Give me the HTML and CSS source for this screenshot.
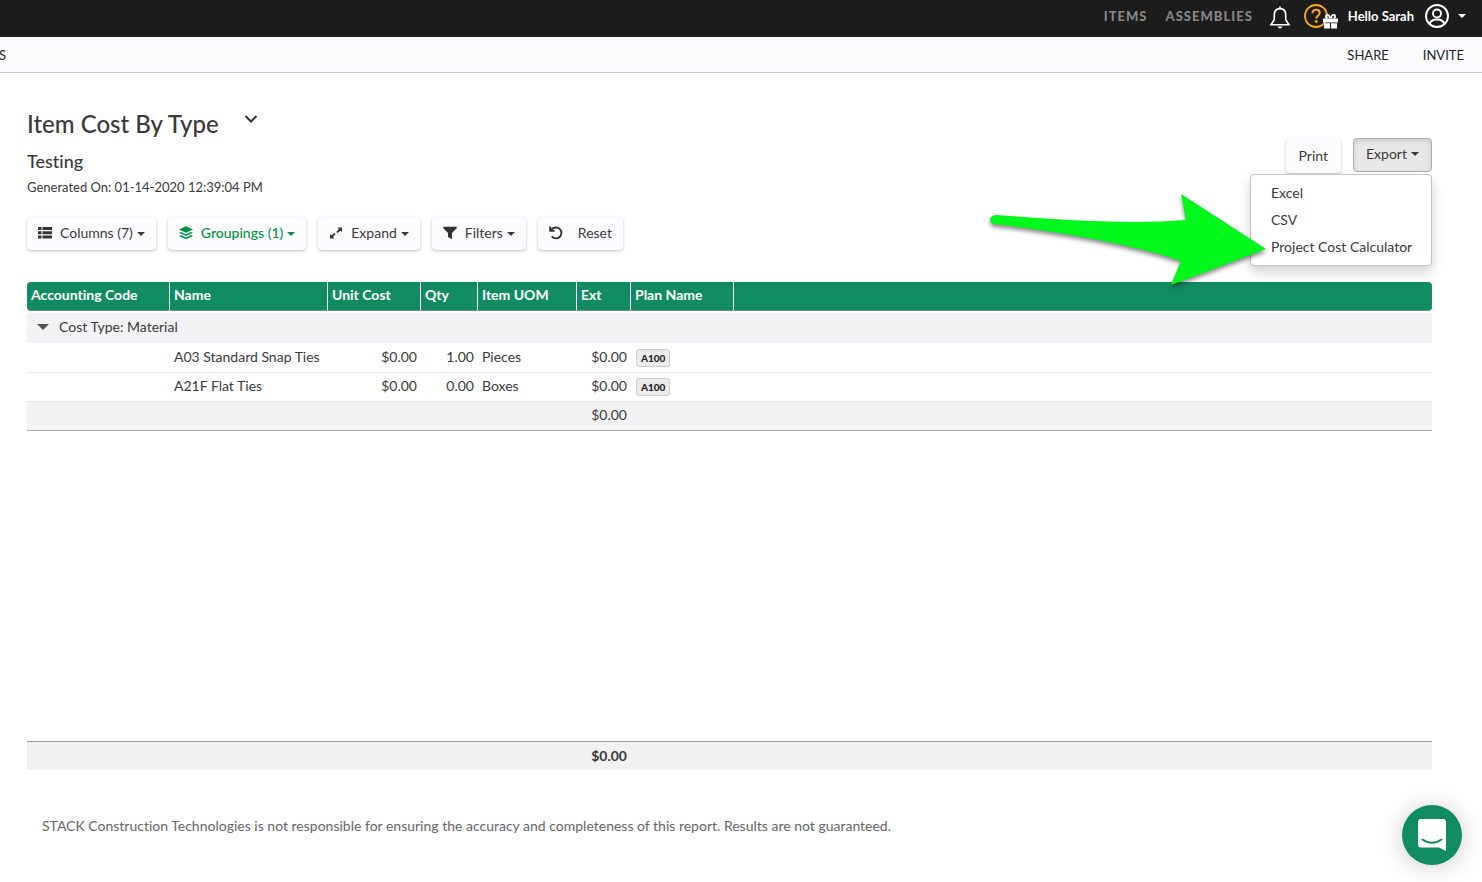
FILE: index.html
```html
<!DOCTYPE html>
<html lang="en">
<head>
<meta charset="utf-8">
<title>Item Cost By Type</title>
<link rel="stylesheet" href="styles.css">
</head>
<body>
<header class="topbar">
  <nav class="topnav">
    <a class="topnav-link" href="#">ITEMS</a>
    <a class="topnav-link" href="#">ASSEMBLIES</a>
  </nav>
  <button class="icon-btn bell" type="button" aria-label="Notifications">
    <svg width="22" height="24" viewBox="0 0 22 24" fill="none" stroke="#fff" stroke-width="1.6" stroke-linejoin="round"><path d="M11 2.6C7.2 2.6 5.3 5.4 5.3 9v3.6c0 2.4-1.5 3.9-3.6 6.2h18.6c-2.1-2.3-3.6-3.8-3.6-6.2V9c0-3.6-1.900-6.400-5.700-6.400z"/><path d="M11 1v1.6" stroke-linecap="round"/><path d="M8.600 20.600c.4 1.200 1.300 1.900 2.400 1.900s2-.7 2.400-1.900z" fill="#fff" stroke="none"/></svg>
  </button>
  <button class="icon-btn help" type="button" aria-label="Help">
    <svg width="34" height="26" viewBox="0 0 34 26"><circle cx="12" cy="13" r="11" fill="none" stroke="#fba919" stroke-width="1.8"/><path d="M8.500 10.300c0-2.200 1.500-3.500 3.600-3.500s3.600 1.200 3.600 3.100c0 2.700-3.500 2.900-3.500 5.700" fill="none" stroke="#fba919" stroke-width="2"/><circle cx="12.200" cy="18.500" r="1.400" fill="#fba919"/><g fill="#fff"><path d="M19 15.500h15v4H19zM20 20.200h6v5.300h-6zM27 20.200h6v5.300h-6z"/><path d="M25.900 15.200c-.5-2.500-1.600-3.600-3-3.300-1.500.4-1.300 2.400.1 3.300M27.100 15.200c.5-2.500 1.600-3.600 3-3.300 1.500.4 1.300 2.400-.1 3.300" fill="none" stroke="#fff" stroke-width="1.800"/></g></svg>
  </button>
  <button class="user-btn" type="button">
    <span>Hello Sarah</span>
    <svg width="24" height="24" viewBox="0 0 24 24" fill="none" stroke="#fff" stroke-width="1.900"><circle cx="12" cy="12" r="11"/><circle cx="12" cy="9.500" r="4"/><path d="M4.800 19.800c.8-3.200 3.400-4.300 7.200-4.300s6.400 1.100 7.200 4.300"/></svg>
    <i class="caret"></i>
  </button>
</header>
<div class="subbar">
  <a class="subbar-link subbar-cut" href="#">S</a>
  <div class="subbar-actions">
    <a class="subbar-link" href="#">SHARE</a>
    <a class="subbar-link" href="#">INVITE</a>
  </div>
</div>
<main class="report">
  <div class="report-head">
    <div>
      <div class="title-row">
        <h1>Item Cost By Type</h1>
        <button class="title-toggle" type="button" aria-label="Choose report">
          <svg width="14" height="10" viewBox="0 0 14 10" fill="none" stroke="#333" stroke-width="2"><path d="M1.500 2l5.500 5.500L12.500 2"/></svg>
        </button>
      </div>
      <h2>Testing</h2>
      <p class="generated">Generated On: 01-14-2020 12:39:04 PM</p>
    </div>
    <div class="head-actions">
      <button class="btn btn-print" type="button">Print</button>
      <div class="dropdown">
        <button class="btn btn-export" type="button" aria-expanded="true">Export<i class="caret"></i></button>
        <div class="menu">
          <a href="#">Excel</a>
          <a href="#">CSV</a>
          <a href="#">Project Cost Calculator</a>
          <svg class="pointer" width="286" height="100" viewBox="0 0 286 100"><path d="M10 24C62 28 140 34 200 29L195 3 280 58 185 94 195 70C150 54 70 40 8 33 3 32 2 25 10 24z" fill="#00f91a"/></svg>
        </div>
      </div>
    </div>
  </div>
  <div class="toolbar">
    <button class="btn tool" type="button">
      <svg width="14" height="14" viewBox="0 0 14 14" fill="#333"><path d="M0 1h3.500v3H0zM4.500 1H14v3H4.500zM0 5.300h3.500v3H0zM4.500 5.300H14v3H4.500zM0 9.600h3.500v3H0zM4.500 9.600H14v3H4.500z"/></svg>
      <span>Columns (7)<i class="caret"></i></span>
    </button>
    <button class="btn tool tool-active" type="button">
      <svg width="14" height="14" viewBox="0 0 14 14" fill="#009540"><path d="M7 .3l7 3.200-7 3.200-7-3.200z"/><path d="M0 6.800l2-.9 5 2.300 5-2.300 2 .9-7 3.200z"/><path d="M0 10l2-.9 5 2.300 5-2.300 2 .9-7 3.300z"/></svg>
      <span>Groupings (1)<i class="caret"></i></span>
    </button>
    <button class="btn tool" type="button">
      <svg width="14" height="14" viewBox="0 0 14 14" fill="#333"><path d="M8.500 1.500H13v4.500l-1.500-1.500-3 2.600-1.200-1.200 2.700-2.900zM5.500 12.500H1V8l1.500 1.500L5.300 7l1.200 1.200L4 11z"/></svg>
      <span>Expand<i class="caret"></i></span>
    </button>
    <button class="btn tool" type="button">
      <svg width="14" height="14" viewBox="0 0 14 14" fill="#333"><path d="M.3.800h13.400v1.400L9 7v6.200L5 11V7L.3 2.200z"/></svg>
      <span>Filters<i class="caret"></i></span>
    </button>
    <button class="btn tool tool-reset" type="button">
      <svg width="14" height="14" viewBox="0 0 14 14" fill="none" stroke="#333" stroke-width="1.900"><path d="M2.300 4.300C3.400 2.400 5 1.500 7 1.500c3.100 0 5.400 2.400 5.400 5.400S10.100 12.400 7 12.400c-1.900 0-3.300-.8-4.300-2.200"/><path d="M1.200.5v4.400h4.500"/></svg>
      <span>Reset</span>
    </button>
  </div>
  <div class="grid">
    <table>
      <colgroup><col class="c-code"><col class="c-name"><col class="c-cost"><col class="c-qty"><col class="c-uom"><col class="c-ext"><col class="c-plan"><col></colgroup>
      <thead>
        <tr><th>Accounting Code</th><th>Name</th><th>Unit Cost</th><th>Qty</th><th>Item UOM</th><th>Ext</th><th>Plan Name</th><th></th></tr>
      </thead>
      <tbody>
        <tr class="group"><td colspan="8"><button type="button" class="group-btn"><i class="group-caret"></i>Cost Type: Material</button></td></tr>
        <tr><td></td><td>A03 Standard Snap Ties</td><td class="num">$0.00</td><td class="num">1.00</td><td>Pieces</td><td class="num">$0.00</td><td class="plan"><span class="tag">A100</span></td><td></td></tr>
        <tr><td></td><td>A21F Flat Ties</td><td class="num">$0.00</td><td class="num">0.00</td><td>Boxes</td><td class="num">$0.00</td><td class="plan"><span class="tag">A100</span></td><td></td></tr>
        <tr class="subtotal"><td></td><td></td><td></td><td></td><td></td><td class="num">$0.00</td><td></td><td></td></tr>
      </tbody>
    </table>
  </div>
  <table class="grand">
    <colgroup><col class="c-code"><col class="c-name"><col class="c-cost"><col class="c-qty"><col class="c-uom"><col class="c-ext"><col class="c-plan"><col></colgroup>
    <tbody><tr><td></td><td></td><td></td><td></td><td></td><td class="num">$0.00</td><td></td><td></td></tr></tbody>
  </table>
  <p class="disclaimer">STACK Construction Technologies is not responsible for ensuring the accuracy and completeness of this report. Results are not guaranteed.</p>
</main>
<button class="chat" type="button" aria-label="Open chat">
  <svg width="28" height="32" viewBox="0 0 28 32"><path d="M3 0h22a3 3 0 0 1 3 3v29l-7-3.500H3a3 3 0 0 1-3-3V3a3 3 0 0 1 3-3z" fill="#fff"/><path d="M4.500 20.500c5.500 4.300 13.500 4.300 19 0" fill="none" stroke="#118b62" stroke-width="1.800" stroke-linecap="round"/></svg>
</button>
</body>
</html>
```

FILE: styles.css
```css
* { box-sizing: border-box; }
body {
  margin: 0;
  background: #fff;
  color: #3a3a3a;
  font: 14px/20px Lato, "Open Sans", sans-serif;
  font-variant-ligatures: none;
}
a { color: inherit; text-decoration: none; }
button { font: inherit; color: inherit; border: 0; background: none; padding: 0; cursor: pointer; }
h1, h2, p { margin: 0; }
svg { display: block; flex: none; }

.caret {
  display: inline-block;
  border: 4px solid transparent;
  border-top-color: currentColor;
  border-bottom: 0;
  vertical-align: middle;
  margin-left: 4px;
}

.topbar {
  display: flex;
  justify-content: flex-end;
  align-items: center;
  height: 37px;
  padding: 0 16px 5px 0;
  background: #1c1c1c;
  color: #fff;
}
.topnav { display: flex; gap: 18px; margin-right: 16px; }
.topnav-link { color: #868686; font-size: 13px; font-weight: 900; letter-spacing: 1px; }
.bell { margin: 3px 13px 0 0; }
.help { margin-right: 10px; }
.user-btn { display: flex; align-items: center; gap: 11px; font-weight: 700; font-size: 13px; }
.user-btn .caret { margin: 0; }
.user-btn svg { margin-right: -2px; }

.subbar {
  display: flex;
  justify-content: space-between;
  align-items: center;
  height: 36px;
  padding-right: 18px;
  background: #fcfcff;
  border-bottom: 1px solid #ccc;
  color: #222;
}
.subbar-link { font-size: 13px; }
.subbar-cut { margin-left: -1px; }
.subbar-actions { display: flex; gap: 34px; }

.report { padding: 35px 50px 0 27px; }
.report-head { display: flex; justify-content: space-between; align-items: flex-start; }
.title-row { display: flex; gap: 25px; }
h1 { font-size: 24px; line-height: 32px; font-weight: 500; }
.title-toggle { align-self: flex-start; margin-top: 6px; }
h2 { margin-top: 9px; font-size: 18px; line-height: 24px; font-weight: 500; }
.generated { margin-top: 4px; font-size: 13px; }

.btn {
  display: inline-flex;
  align-items: center;
  border-radius: 4px;
  background: #fcfcff;
  box-shadow: 0 1px 3px rgba(0, 0, 0, .25);
}
.head-actions { display: flex; align-items: flex-start; gap: 12px; margin-top: 30px; }
.btn-print { height: 35px; padding: 0 13px; }
.btn-export {
  height: 34px;
  padding: 0 12px 2px;
  border: 1px solid #adadad;
  background: #e8e8e8;
  box-shadow: inset 0 2px 5px rgba(0, 0, 0, .12);
}
.dropdown { position: relative; }
.menu {
  position: absolute;
  z-index: 2;
  top: 36px;
  right: 0;
  width: 182px;
  padding: 5px 0 4px;
  border: 1px solid #c4c4c4;
  border-radius: 4px;
  background: #fff;
  box-shadow: 0 6px 12px rgba(0, 0, 0, .18);
}
.menu a { display: block; padding: 3px 20px 4px; white-space: nowrap; }
.pointer {
  position: absolute;
  top: 16px;
  right: 159px;
  pointer-events: none;
  filter: drop-shadow(0 3px 2px rgba(0, 0, 0, .45));
}

.toolbar { display: flex; gap: 12px; margin-top: 20px; }
.tool { height: 33px; gap: 8px; padding: 0 11px 2px; }
.tool-active { color: #009540; font-weight: 500; }
.tool-reset { gap: 15px; }

.grid { min-height: 459px; padding-top: 32px; box-sizing: content-box; }
table { width: 100%; table-layout: fixed; border-collapse: separate; border-spacing: 0; }
.c-code { width: 143px; }
.c-name { width: 158px; }
.c-cost { width: 93px; }
.c-qty { width: 57px; }
.c-uom { width: 99px; }
.c-ext { width: 54px; }
.c-plan { width: 103px; }
th {
  height: 29px;
  padding: 0 4px 2px;
  border-right: 1px solid #fff;
  border-bottom: 1px solid #6f8f84;
  background: #118b62;
  color: #fff;
  font-weight: 700;
  text-align: left;
}
th:first-child { border-radius: 4px 0 0 4px; }
th:last-child { border-right: 0; border-radius: 0 4px 4px 0; }
td { height: 29px; padding: 0 4px 2px; border-bottom: 1px solid #e5e5e5; white-space: nowrap; }
.num { text-align: right; }
.plan { padding-bottom: 0; }
.group td { height: 33px; padding-bottom: 2px; border-top: 2px solid #fff; border-bottom: 1px solid #fff; background: #f3f3f6; background-clip: padding-box; }
.group-btn { display: flex; align-items: center; }
.group-caret { margin: 0 10px 0 6px; border: 6px solid transparent; border-top-color: #555; border-bottom: 0; }
.subtotal td { background: #f3f3f6; border-bottom-color: #aaa; }
.tag {
  display: block;
  width: max-content;
  margin-left: 1px;
  padding: 0 4px;
  border: 1px solid #ccc;
  border-radius: 3px;
  background: #ebebed;
  color: #222;
  font-size: 10px;
  line-height: 16px;
  font-weight: 900;
}
.grand td { height: 29px; padding-bottom: 0; border-top: 1px solid #999; border-bottom: 0; background: #f1f1f1; font-weight: 700; }
.disclaimer { padding: 46px 15px; color: #666; }

.chat {
  position: fixed;
  right: 20px;
  bottom: 17px;
  display: grid;
  place-items: center;
  width: 60px;
  height: 60px;
  border-radius: 50%;
  background: #118b62;
  box-shadow: 0 2px 24px rgba(0, 0, 0, .2);
}
```
